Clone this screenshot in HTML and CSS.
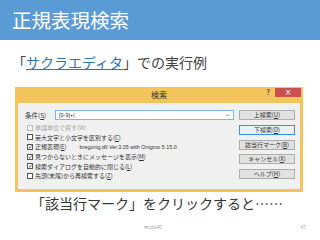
FILE: index.html
```html
<!DOCTYPE html>
<html>
<head>
  <meta charset="UTF-8">
  <title>正規表現検索</title>
  <link rel="stylesheet" href="styles.css">
</head>
<body>
  <div class="slide">
    <h1 class="head">正規表現検索</h1>

    <p class="sub">「<span class="link">サクラエディタ</span>」での実行例</p>

    <div class="dlg">
      <div class="dlg-title">
        <span></span>
        <span class="dlg-name">検索</span>
        <div class="ctrls">
          <span class="help">?</span>
          <span class="close">&#215;</span>
        </div>
      </div>
      <div class="dlg-body">
        <div class="left">
          <div class="cond">
            <span class="cond-label">条件(<u>S</u>)</span>
            <div class="field">
              <span>[0-9]+|</span>
              <span class="arrow">&#8964;</span>
            </div>
          </div>
          <div class="chk off"><span class="box"></span>単語単位で探す(W)</div>
          <div class="chk"><span class="box"></span>英大文字と小文字を区別する(<u>C</u>)</div>
          <div class="chk"><span class="box on">&#10003;</span>正規表現(<u>E</u>)<span class="ver">bregonig.dll Ver.3.05 with Onigmo 5.15.0</span></div>
          <div class="chk"><span class="box on">&#10003;</span>見つからないときにメッセージを表示(<u>M</u>)</div>
          <div class="chk"><span class="box on">&#10003;</span>検索ダイアログを自動的に閉じる(<u>L</u>)</div>
          <div class="chk"><span class="box"></span>先頭(末尾)から再検索する(<u>Z</u>)</div>
        </div>
        <div class="btns">
          <span class="btn">上検索(<u>U</u>)</span>
          <span class="btn def">下検索(<u>D</u>)</span>
          <span class="btn">該当行マーク(<u>B</u>)</span>
          <span class="btn">キャンセル(<u>X</u>)</span>
          <span class="btn">ヘルプ(<u>H</u>)</span>
        </div>
      </div>
    </div>

    <p class="cap">「該当行マーク」をクリックすると……</p>

    <div class="foot">
      <span></span>
      <span class="tag">#cobi40</span>
      <span class="num">47</span>
    </div>
  </div>
</body>
</html>
```

FILE: styles.css
```css
* {
  box-sizing: border-box;
}

body {
  margin: 0;
  background: #fff;
  font-family: "Noto Sans CJK JP", "Noto Sans", sans-serif;
  color: #333;
}

.slide {
  width: 320px;
  height: 240px;
  overflow: hidden;
}

.head {
  margin: 0;
  height: 40px;
  padding-left: 12px;
  background: #5b9bd5;
  color: #fff;
  font-size: 19.5px;
  font-weight: normal;
  line-height: 40px;
}

.sub {
  margin: 12px 0 0;
  padding-left: 12px;
  font-size: 14px;
  line-height: 20px;
  color: #404040;
}

.link {
  color: #2e75b6;
  text-decoration: underline;
}

/* dialog */
.dlg {
  width: 288px;
  height: 105px;
  margin: 15px 0 0 15px;
  padding: 0 3px 3px 3px;
  background: #f2c45a;
  display: flex;
  flex-direction: column;
}

.dlg-title {
  height: 16px;
  display: grid;
  grid-template-columns: 1fr auto 1fr;
  align-items: start;
}

.dlg-name {
  font-size: 8px;
  line-height: 16px;
  color: #333;
}

.ctrls {
  justify-self: end;
  display: flex;
  align-items: center;
  gap: 3px;
  margin-right: -1px;
}

.help {
  font-size: 7px;
  font-weight: bold;
  line-height: 10px;
  color: #444;
  width: 8px;
  text-align: center;
}

.close {
  width: 26px;
  height: 9px;
  margin-top: 1px;
  background: #c9504f;
  color: #fff;
  font-size: 8px;
  line-height: 9px;
  text-align: center;
  font-family: "DejaVu Sans", sans-serif;
}

.dlg-body {
  flex: 1;
  background: #f0f0f0;
  display: flex;
  padding: 7px 5px 0 7px;
  gap: 5px;
  font-size: 6px;
  color: #333;
}

.left {
  flex: 1;
  display: flex;
  flex-direction: column;
}

.cond {
  display: flex;
  align-items: center;
  height: 10px;
  margin-bottom: 3px;
}

.cond-label {
  width: 30px;
  font-size: 6.5px;
}

.field {
  flex: 1;
  height: 10px;
  background: #fff;
  border: 1px solid #7eb4ea;
  display: flex;
  justify-content: space-between;
  align-items: center;
  padding: 0 3px;
  font-size: 5.5px;
  font-family: "Liberation Sans", sans-serif;
}

.arrow {
  font-size: 6px;
  line-height: 6px;
  margin-top: -3px;
  color: #555;
}

.chk {
  height: 9.6px;
  display: flex;
  align-items: center;
  white-space: nowrap;
  margin-left: 2px;
}

.chk.off {
  color: #aaa;
}

.box {
  width: 6px;
  height: 6px;
  border: 1px solid #555;
  background: #fff;
  margin-right: 2px;
  font-size: 6px;
  line-height: 4px;
  text-align: center;
  font-weight: bold;
  color: #222;
  font-family: "DejaVu Sans", sans-serif;
}

.chk.off .box {
  border-color: #bbb;
}

.ver {
  margin-left: 13px;
  font-family: "Liberation Sans", sans-serif;
  font-size: 5.4px;
}

.btns {
  width: 56px;
  display: flex;
  flex-direction: column;
  gap: 4.8px;
}

.btn {
  height: 10px;
  background: #e1e1e1;
  border: 1px solid #adadad;
  font-size: 6px;
  line-height: 8px;
  text-align: center;
  white-space: nowrap;
}

.btn.def {
  border-color: #3c8fdc;
  background: #e5f1fb;
}

.cap {
  margin: 1px 0 0;
  padding-left: 31px;
  font-size: 14px;
  line-height: 20px;
  color: #333;
}

.foot {
  margin-top: 11px;
  display: grid;
  grid-template-columns: 1fr auto 1fr;
  font-family: "Liberation Sans", sans-serif;
  font-size: 5px;
  color: #a6a6a6;
  padding-right: 14px;
}

.num {
  justify-self: end;
}
```
